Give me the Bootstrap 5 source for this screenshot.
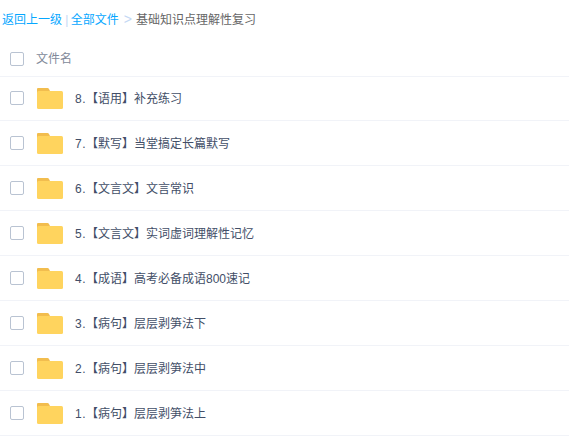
<!DOCTYPE html>
<html lang="zh">
<head>
<meta charset="utf-8">
<title>基础知识点理解性复习</title>
<link href="https://cdn.jsdelivr.net/npm/bootstrap@5.3.0/dist/css/bootstrap.min.css" rel="stylesheet">
<style>
html,body{background:#fff;overflow:hidden}
body{font-family:"Liberation Sans","Noto Sans CJK SC",sans-serif;font-size:12px;color:#424e67;line-height:20px}
.crumbs{height:40px;padding:10px 0 0 2px;color:#666}
.crumbs a{color:#06a7ff;text-decoration:none}
.crumbs .sep{color:#c4d8f4;margin:0 -1px 0 0}
.crumbs .arrow{color:#c4d8f4;margin:0 4px 0 5px;font-size:14px;line-height:1;font-family:"Liberation Sans",sans-serif}
.file-head{height:37px;padding-top:2px;color:#818999;border-bottom:1px solid #f1f3f8;padding-left:10px}
.file-head .label{padding-top:0;margin-bottom:1px}
.file-row{height:45px;border-bottom:1px solid #f1f3f8;padding-left:10px}
.file-head + .file-row{height:44px;padding-bottom:1px}
.tick{width:14px;height:14px;border:1px solid #b9c3d2;border-radius:2px;flex:none;background:#fff}
.file-head .tick{margin-right:12px}
.file-row .tick{margin-right:13px}
.folder{width:26px;height:21px;flex:none;margin-right:12px;display:block}
.label{padding-top:2px}
.num{letter-spacing:.5px}
</style>
</head>
<body>
<div class="crumbs"><a href="#">返回上一级</a> <span class="sep">|</span> <a href="#">全部文件</a><span class="arrow">&gt;</span>基础知识点理解性复习</div>
<div class="file-head d-flex align-items-center"><span class="tick"></span><span class="label">文件名</span></div>
<div class="file-row d-flex align-items-center"><span class="tick"></span><svg class="folder" viewBox="0 0 26 21"><path d="M1 0h9.500a1.500 1.500 0 0 1 1.200.600L13 3v3H0V1a1 1 0 0 1 1-1z" fill="#f2bd4e"/><rect y="3" width="26" height="18" rx="1.500" fill="#ffd45e"/></svg><span class="label"><span class="num">8.</span>【语用】补充练习</span></div>
<div class="file-row d-flex align-items-center"><span class="tick"></span><svg class="folder" viewBox="0 0 26 21"><path d="M1 0h9.500a1.500 1.500 0 0 1 1.200.600L13 3v3H0V1a1 1 0 0 1 1-1z" fill="#f2bd4e"/><rect y="3" width="26" height="18" rx="1.500" fill="#ffd45e"/></svg><span class="label"><span class="num">7.</span>【默写】当堂搞定长篇默写</span></div>
<div class="file-row d-flex align-items-center"><span class="tick"></span><svg class="folder" viewBox="0 0 26 21"><path d="M1 0h9.500a1.500 1.500 0 0 1 1.200.600L13 3v3H0V1a1 1 0 0 1 1-1z" fill="#f2bd4e"/><rect y="3" width="26" height="18" rx="1.500" fill="#ffd45e"/></svg><span class="label"><span class="num">6.</span>【文言文】文言常识</span></div>
<div class="file-row d-flex align-items-center"><span class="tick"></span><svg class="folder" viewBox="0 0 26 21"><path d="M1 0h9.500a1.500 1.500 0 0 1 1.200.600L13 3v3H0V1a1 1 0 0 1 1-1z" fill="#f2bd4e"/><rect y="3" width="26" height="18" rx="1.500" fill="#ffd45e"/></svg><span class="label"><span class="num">5.</span>【文言文】实词虚词理解性记忆</span></div>
<div class="file-row d-flex align-items-center"><span class="tick"></span><svg class="folder" viewBox="0 0 26 21"><path d="M1 0h9.500a1.500 1.500 0 0 1 1.200.600L13 3v3H0V1a1 1 0 0 1 1-1z" fill="#f2bd4e"/><rect y="3" width="26" height="18" rx="1.500" fill="#ffd45e"/></svg><span class="label"><span class="num">4.</span>【成语】高考必备成语800速记</span></div>
<div class="file-row d-flex align-items-center"><span class="tick"></span><svg class="folder" viewBox="0 0 26 21"><path d="M1 0h9.500a1.500 1.500 0 0 1 1.200.600L13 3v3H0V1a1 1 0 0 1 1-1z" fill="#f2bd4e"/><rect y="3" width="26" height="18" rx="1.500" fill="#ffd45e"/></svg><span class="label"><span class="num">3.</span>【病句】层层剥笋法下</span></div>
<div class="file-row d-flex align-items-center"><span class="tick"></span><svg class="folder" viewBox="0 0 26 21"><path d="M1 0h9.500a1.500 1.500 0 0 1 1.200.600L13 3v3H0V1a1 1 0 0 1 1-1z" fill="#f2bd4e"/><rect y="3" width="26" height="18" rx="1.500" fill="#ffd45e"/></svg><span class="label"><span class="num">2.</span>【病句】层层剥笋法中</span></div>
<div class="file-row d-flex align-items-center"><span class="tick"></span><svg class="folder" viewBox="0 0 26 21"><path d="M1 0h9.500a1.500 1.500 0 0 1 1.200.600L13 3v3H0V1a1 1 0 0 1 1-1z" fill="#f2bd4e"/><rect y="3" width="26" height="18" rx="1.500" fill="#ffd45e"/></svg><span class="label"><span class="num">1.</span>【病句】层层剥笋法上</span></div>
<script src="https://cdn.jsdelivr.net/npm/bootstrap@5.3.0/dist/js/bootstrap.bundle.min.js"></script>
</body>
</html>
